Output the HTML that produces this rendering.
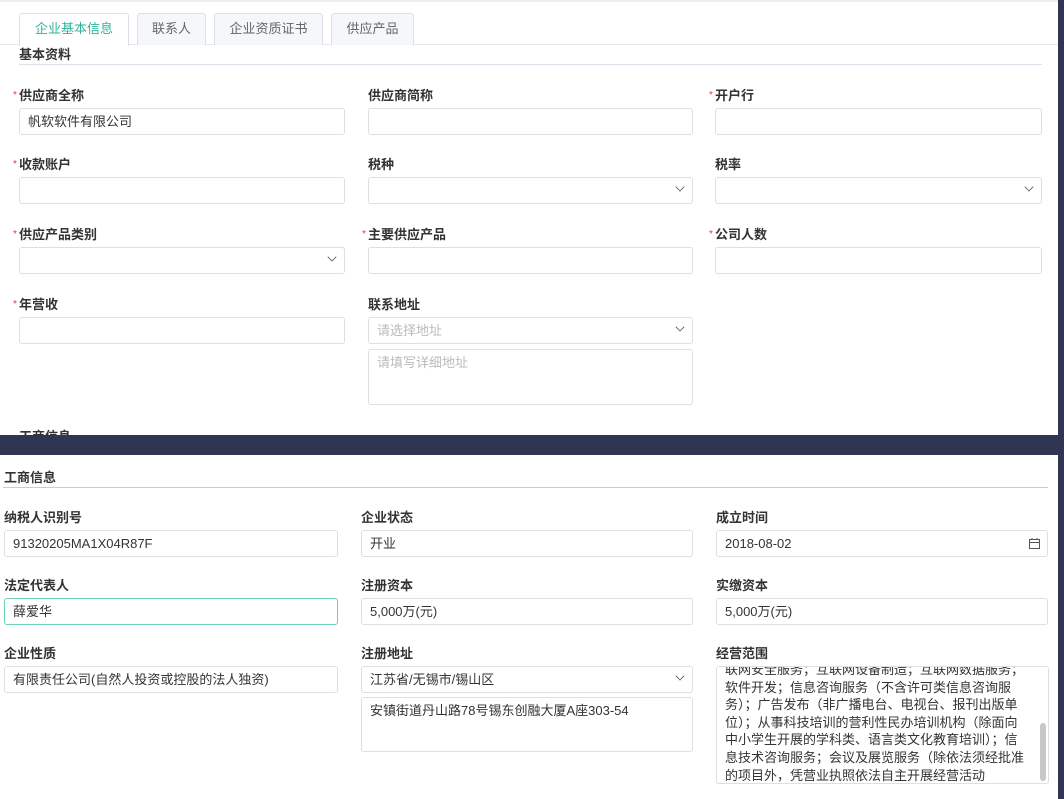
<!DOCTYPE html>
<html><head><meta charset="utf-8"><style>
*{box-sizing:border-box;margin:0;padding:0}
body{width:1064px;height:799px;position:relative;overflow:hidden;background:#fff;font-family:"Liberation Sans","Noto Sans CJK SC",sans-serif;color:#333}
.a{position:absolute}
.tab{position:absolute;top:13px;height:32px;border:1px solid #dcdfe6;border-bottom:none;background:#f5f7fa;border-radius:3px 3px 0 0;font-size:13px;color:#666;text-align:center;line-height:30px}
.lb{position:absolute;font-size:13px;font-weight:bold;color:#333;line-height:16px}
.lb i{position:absolute;left:-6px;top:0;color:#e33;font-style:normal;font-size:10px;font-weight:normal}
.in{position:absolute;height:27px;border:1px solid #dcdfe6;border-radius:3px;background:#fff;font-size:13px;line-height:25px;padding-left:8px;color:#333}
.ph{color:#bbb}
.ch{position:absolute;right:8px;width:8px;height:8px;border-right:1.3px solid #555;border-bottom:1.3px solid #555;transform:rotate(45deg) scale(.8);top:5px}
.sec{position:absolute;font-size:13px;font-weight:bold}
</style></head><body>
<div class="a" style="left:0;top:0;width:1058px;height:2px;background:#eee"></div>
<div class="a" style="left:0;top:44px;width:1058px;height:1px;background:#e4e7ed"></div>
<div class="tab" style="left:19px;width:110px;background:#fff;color:#2fb39a;height:33px">企业基本信息</div>
<div class="tab" style="left:137px;width:69px">联系人</div>
<div class="tab" style="left:214px;width:109px">企业资质证书</div>
<div class="tab" style="left:331px;width:83px">供应产品</div>
<div class="sec" style="left:19px;top:44px">基本资料</div>
<div class="a" style="left:19px;top:64px;width:1023px;height:1px;background:#dde2ea"></div>

<div class="lb" style="left:19px;top:88px"><i>*</i>供应商全称</div>
<div class="in" style="left:19px;top:108px;width:326px">帆软软件有限公司</div>
<div class="lb" style="left:368px;top:88px">供应商简称</div>
<div class="in" style="left:368px;top:108px;width:325px"></div>
<div class="lb" style="left:715px;top:88px"><i>*</i>开户行</div>
<div class="in" style="left:715px;top:108px;width:327px"></div>

<div class="lb" style="left:19px;top:157px"><i>*</i>收款账户</div>
<div class="in" style="left:19px;top:177px;width:326px"></div>
<div class="lb" style="left:368px;top:157px">税种</div>
<div class="in" style="left:368px;top:177px;width:325px"><span class="ch"></span></div>
<div class="lb" style="left:715px;top:157px">税率</div>
<div class="in" style="left:715px;top:177px;width:327px"><span class="ch"></span></div>

<div class="lb" style="left:19px;top:227px"><i>*</i>供应产品类别</div>
<div class="in" style="left:19px;top:247px;width:326px"><span class="ch"></span></div>
<div class="lb" style="left:368px;top:227px"><i>*</i>主要供应产品</div>
<div class="in" style="left:368px;top:247px;width:325px"></div>
<div class="lb" style="left:715px;top:227px"><i>*</i>公司人数</div>
<div class="in" style="left:715px;top:247px;width:327px"></div>

<div class="lb" style="left:19px;top:297px"><i>*</i>年营收</div>
<div class="in" style="left:19px;top:317px;width:326px"></div>
<div class="lb" style="left:368px;top:297px">联系地址</div>
<div class="in ph" style="left:368px;top:317px;width:325px">请选择地址<span class="ch"></span></div>
<div class="in ph" style="left:368px;top:349px;width:325px;height:56px;line-height:26px">请填写详细地址</div>
<div class="sec" style="left:19px;top:426px">工商信息</div>

<div class="a" style="left:1058px;top:0;width:6px;height:799px;background:#2f3553"></div>
<div class="a" style="left:0;top:435px;width:1064px;height:20px;background:#2f3553"></div>

<div class="sec" style="left:4px;top:467px">工商信息</div>
<div class="a" style="left:3px;top:487px;width:1045px;height:1px;background:#ccc"></div>

<div class="lb" style="left:4px;top:510px">纳税人识别号</div>
<div class="in" style="left:4px;top:530px;width:334px">91320205MA1X04R87F</div>
<div class="lb" style="left:361px;top:510px">企业状态</div>
<div class="in" style="left:361px;top:530px;width:332px">开业</div>
<div class="lb" style="left:716px;top:510px">成立时间</div>
<div class="in" style="left:716px;top:530px;width:332px">2018-08-02<svg style="position:absolute;right:7px;top:7px" width="11" height="11" viewBox="0 0 11 11"><rect x="0.5" y="1.5" width="10" height="9" fill="none" stroke="#555"/><line x1="0.5" y1="4.5" x2="10.5" y2="4.5" stroke="#555"/><line x1="3" y1="0" x2="3" y2="2" stroke="#555"/><line x1="8" y1="0" x2="8" y2="2" stroke="#555"/></svg></div>

<div class="lb" style="left:4px;top:578px">法定代表人</div>
<div class="in" style="left:4px;top:598px;width:334px;border-color:#6ccfb8">薛爱华</div>
<div class="lb" style="left:361px;top:578px">注册资本</div>
<div class="in" style="left:361px;top:598px;width:332px">5,000万(元)</div>
<div class="lb" style="left:716px;top:578px">实缴资本</div>
<div class="in" style="left:716px;top:598px;width:332px">5,000万(元)</div>

<div class="lb" style="left:4px;top:646px">企业性质</div>
<div class="in" style="left:4px;top:666px;width:334px">有限责任公司(自然人投资或控股的法人独资)</div>
<div class="lb" style="left:361px;top:646px">注册地址</div>
<div class="in" style="left:361px;top:666px;width:332px">江苏省/无锡市/锡山区<span class="ch"></span></div>
<div class="in" style="left:361px;top:697px;width:332px;height:55px;line-height:26px">安镇街道丹山路78号锡东创融大厦A座303-54</div>
<div class="lb" style="left:716px;top:646px">经营范围</div>
<div class="in" style="left:716px;top:666px;width:333px;height:118px;overflow:hidden;padding:0 14px 0 8px;line-height:17.6px;white-space:nowrap">
<div style="margin-top:-6px">联网安全服务；互联网设备制造；互联网数据服务；<br>软件开发；信息咨询服务（不含许可类信息咨询服<br>务）；广告发布（非广播电台、电视台、报刊出版单<br>位）；从事科技培训的营利性民办培训机构（除面向<br>中小学生开展的学科类、语言类文化教育培训）；信<br>息技术咨询服务；会议及展览服务（除依法须经批准<br>的项目外，凭营业执照依法自主开展经营活动</div>
<div style="position:absolute;right:2px;top:56px;width:6px;height:58px;background:#c8c8c8;border-radius:3px"></div>
</div>
</body></html>
